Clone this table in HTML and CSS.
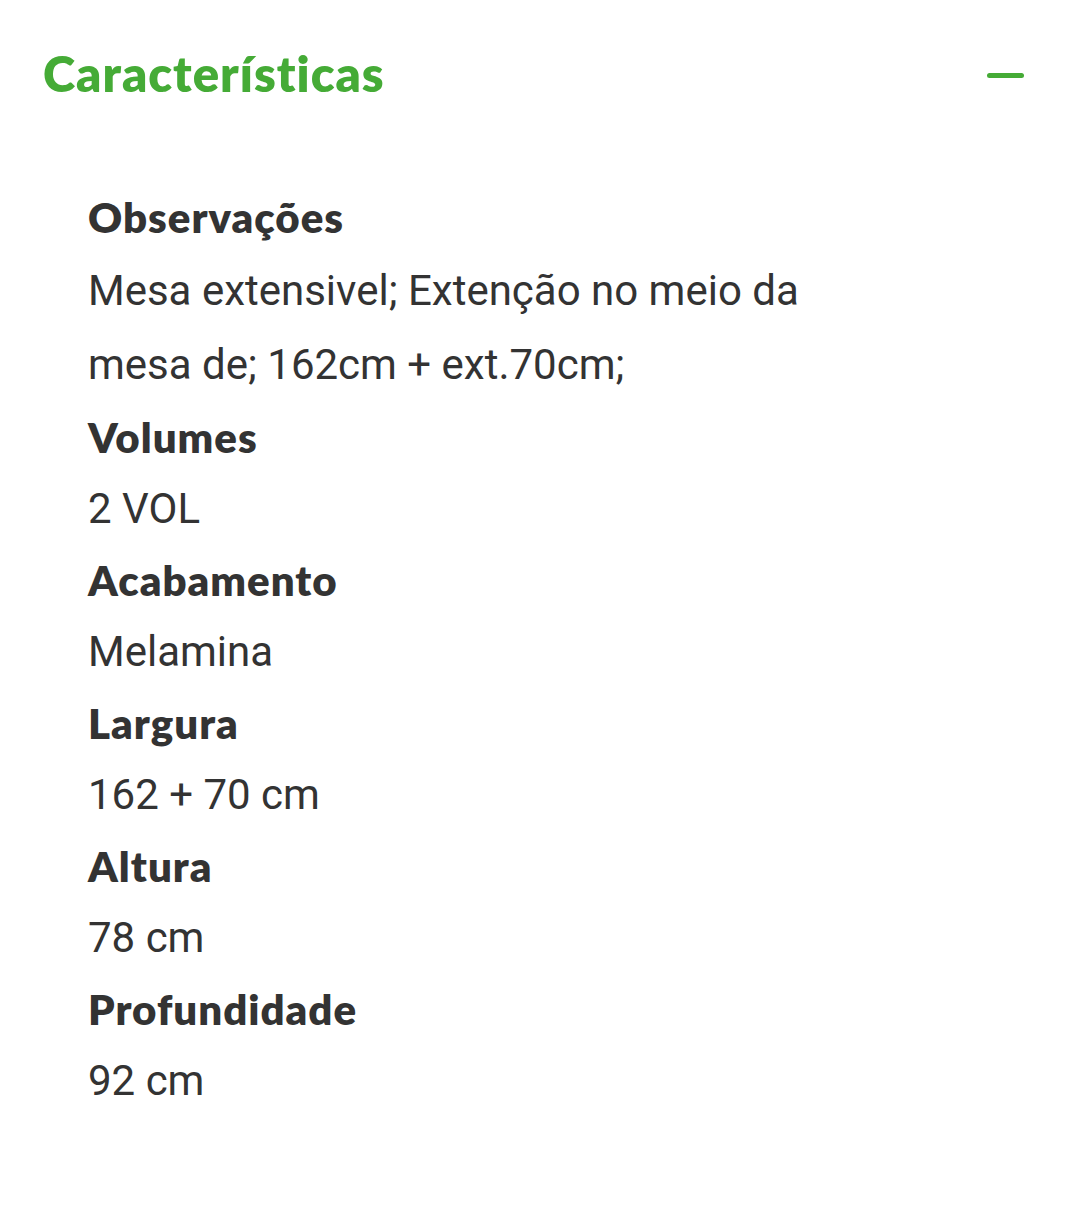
FILE: index.html
```html
<!DOCTYPE html>
<html lang="pt">
<head>
<meta charset="utf-8">
<link rel="stylesheet" href="styles.css">
<title>Características</title>
</head>
<body>
<section class="accordion">
  <header class="acc-head">
    <h2 class="acc-title">Características</h2>
    <span class="acc-toggle" aria-hidden="true"></span>
  </header>
  <dl class="specs">
    <dt>Observações</dt>
    <dd class="multi">Mesa extensivel; Extenção no meio da<br>mesa de; 162cm + ext.70cm;</dd>
    <dt>Volumes</dt>
    <dd>2 VOL</dd>
    <dt>Acabamento</dt>
    <dd>Melamina</dd>
    <dt>Largura</dt>
    <dd>162 + 70 cm</dd>
    <dt>Altura</dt>
    <dd>78 cm</dd>
    <dt>Profundidade</dt>
    <dd>92 cm</dd>
  </dl>
</section>
</body>
</html>
```
FILE: styles.css
```css
html, body {
  margin: 0;
  padding: 0;
  background: #ffffff;
}
body {
  width: 1080px;
  height: 1212px;
  overflow: hidden;
}
.accordion {
  padding: 34px 56px 0 43px;
}
.acc-head {
  display: flex;
  align-items: center;
  justify-content: space-between;
  height: 78px;
}
.acc-title {
  margin: 0;
  font-family: "Lato", "Noto Sans", sans-serif;
  font-weight: 800;
  font-size: 49px;
  color: #45ab36;
  letter-spacing: 1px;
  font-variant-ligatures: none;
}
.acc-toggle {
  display: block;
  width: 37px;
  height: 5px;
  border-radius: 3px;
  background: #45ab36;
  margin-top: 4px;
}
.specs {
  margin: 70px 0 0 45px;
  padding: 0;
}
.specs dt {
  font-family: "Lato", "Noto Sans", sans-serif;
  font-weight: 800;
  font-size: 42px;
  letter-spacing: 1px;
  font-variant-ligatures: none;
  line-height: 71.5px;
  color: #333333;
}
.specs dd {
  margin: 0;
  font-family: "Roboto", sans-serif;
  font-weight: 400;
  font-size: 42px;
  line-height: 71.5px;
  color: #333333;
}
.specs dd.multi {
  line-height: 74px;
}
```
